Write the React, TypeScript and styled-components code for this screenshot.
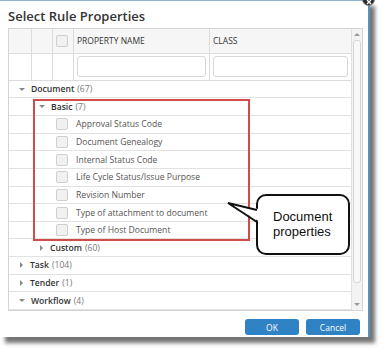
import React from 'react'
import styled, { createGlobalStyle } from 'styled-components'

const GlobalStyle = createGlobalStyle`
  body {
    margin: 0;
    background: #fff;
    font-family: "Open Sans", "Liberation Sans", sans-serif;
  }
`

const Page = styled.div`
  width: 391px;
  height: 356px;
  position: relative;
  overflow: hidden;
  background: #fff;
`

const Dialog = styled.div`
  position: relative;
  width: 370px;
  height: 337px;
  background: #fff;
  border-top: 1px solid #8fb4d2;
  border-right: 2px solid #5e8fb8;
  box-shadow: 5px 6px 4px rgba(0, 0, 0, 0.55);
  padding: 0 8px;
  box-sizing: border-box;
  display: flex;
  flex-direction: column;
`

const CloseButton = styled.div`
  position: absolute;
  right: -7px;
  top: -8px;
  width: 13px;
  height: 13px;
  border-radius: 50%;
  background: #2a2a2a;
  border: 1px solid #888;
  display: flex;
  align-items: center;
  justify-content: center;
  padding-top: 4px;
  box-sizing: border-box;
`

const Title = styled.div`
  height: 27px;
  font-size: 13px;
  font-weight: 600;
  color: #333;
  line-height: 30px;
`

const Grid = styled.div`
  width: 355px;
  height: 283px;
  border: 1px solid #d4d4d4;
  box-sizing: border-box;
  display: flex;
`

const GridBody = styled.div`
  flex: 1;
  display: flex;
  flex-direction: column;
`

const HeaderRow = styled.div<{ $filter?: boolean }>`
  display: grid;
  grid-template-columns: 23px 21px 21px 136px 1fr;
  height: ${p => (p.$filter ? 27 : 25)}px;
  background: ${p => (p.$filter ? '#fff' : '#f6f6f6')};
  border-bottom: 1px solid #dcdcdc;
  box-sizing: border-box;
`

const HeaderCell = styled.div<{ $last?: boolean }>`
  border-right: ${p => (p.$last ? 'none' : '1px solid #dcdcdc')};
  display: flex;
  align-items: center;
  padding: 0 3px;
  font-size: 8.5px;
  color: #333;
  box-sizing: border-box;
`

const FilterInput = styled.div`
  flex: 1;
  height: 19px;
  border: 1px solid #d8d8d8;
  border-radius: 3px;
  background: #fff;
`

const Check = styled.div`
  width: 12px;
  height: 12px;
  border: 1px solid #cfcfcf;
  border-radius: 2px;
  background: #f1f1f1;
  box-sizing: border-box;
  flex-shrink: 0;
`

const TreeRow = styled.div<{ $indent: number }>`
  height: 17.7px;
  border-bottom: 1px solid #e2e2e2;
  box-sizing: border-box;
  display: flex;
  align-items: center;
  padding-left: ${p => p.$indent}px;
  font-size: 8.6px;
  white-space: nowrap;
`

const Arrow = styled.span<{ $open: boolean }>`
  display: inline-block;
  width: 0;
  height: 0;
  margin-right: 6px;
  ${p =>
    p.$open
      ? `border-left: 3px solid transparent; border-right: 3px solid transparent; border-top: 3.5px solid #888;`
      : `border-top: 3px solid transparent; border-bottom: 3px solid transparent; border-left: 3.5px solid #888; margin-left: 1px; margin-right: 7px;`}
`

const GroupName = styled.span`
  color: #333;
  font-weight: 600;
`

const Count = styled.span`
  color: #777;
  margin-left: 3px;
`

const LeafName = styled.span`
  color: #555;
  margin-left: 8px;
`

const Scrollbar = styled.div`
  width: 11px;
  background: #f3f3f3;
  border-left: 1px solid #e0e0e0;
  display: flex;
  flex-direction: column;
  align-items: center;
  padding: 4px 0 4px;
  box-sizing: border-box;
`

const ScrollArrow = styled.div<{ $up: boolean }>`
  width: 0;
  height: 0;
  border-left: 3px solid transparent;
  border-right: 3px solid transparent;
  ${p => (p.$up ? 'border-bottom: 3px solid #999;' : 'border-top: 3px solid #999;')}
`

const Thumb = styled.div`
  width: 8px;
  height: 243px;
  margin: 4px 0 0;
  background: #f8f8f8;
  border: 1px solid #d6d6d6;
  border-radius: 3px;
  box-sizing: border-box;
`

const Spacer = styled.div`
  flex: 1;
`

const Footer = styled.div`
  display: flex;
  justify-content: flex-end;
  gap: 7px;
  padding-top: 8px;
`

const Button = styled.div`
  width: 54px;
  height: 16px;
  border-radius: 3px;
  background: #2f82c3;
  color: #fff;
  font-size: 8.5px;
  display: flex;
  align-items: center;
  justify-content: center;
`

const Highlight = styled.div`
  position: absolute;
  left: 33px;
  top: 99px;
  width: 217px;
  height: 142px;
  border: 2px solid #d24b4b;
  box-sizing: border-box;
`

const Callout = styled.div`
  position: absolute;
  left: 256px;
  top: 194px;
  width: 94px;
  height: 61px;
  border: 2px solid #111;
  border-radius: 10px;
  background: #fff;
  box-sizing: border-box;
  font-family: "Liberation Sans", Arial, sans-serif;
  font-size: 13px;
  line-height: 15px;
  color: #111;
  padding: 13px 0 0 15px;
`

const Pointer = styled.svg`
  position: absolute;
  left: 226px;
  top: 200px;
`

type Row =
  | { kind: 'group'; name: string; count: number; level: number; open: boolean }
  | { kind: 'leaf'; name: string }

const rows: Row[] = [
  { kind: 'group', name: 'Document', count: 67, level: 0, open: true },
  { kind: 'group', name: 'Basic', count: 7, level: 1, open: true },
  { kind: 'leaf', name: 'Approval Status Code' },
  { kind: 'leaf', name: 'Document Genealogy' },
  { kind: 'leaf', name: 'Internal Status Code' },
  { kind: 'leaf', name: 'Life Cycle Status/Issue Purpose' },
  { kind: 'leaf', name: 'Revision Number' },
  { kind: 'leaf', name: 'Type of attachment to document' },
  { kind: 'leaf', name: 'Type of Host Document' },
  { kind: 'group', name: 'Custom', count: 60, level: 1, open: false },
  { kind: 'group', name: 'Task', count: 104, level: 0, open: false },
  { kind: 'group', name: 'Tender', count: 1, level: 0, open: false },
  { kind: 'group', name: 'Workflow', count: 4, level: 0, open: true },
]

const App = () => {
  return (
    <Page>
      <GlobalStyle />
      <Dialog>
        <CloseButton>
          <svg width="6" height="6" viewBox="0 0 6 6">
            <path d="M1 1L5 5M5 1L1 5" stroke="#fff" strokeWidth="1.4" />
          </svg>
        </CloseButton>
        <Title>Select Rule Properties</Title>
        <Grid>
          <GridBody>
            <HeaderRow>
              <HeaderCell />
              <HeaderCell />
              <HeaderCell><Check /></HeaderCell>
              <HeaderCell>PROPERTY NAME</HeaderCell>
              <HeaderCell $last>CLASS</HeaderCell>
            </HeaderRow>
            <HeaderRow $filter>
              <HeaderCell />
              <HeaderCell />
              <HeaderCell />
              <HeaderCell><FilterInput /></HeaderCell>
              <HeaderCell $last><FilterInput /></HeaderCell>
            </HeaderRow>
            {rows.map(r =>
              r.kind === 'group' ? (
                <TreeRow key={r.name} $indent={r.level === 0 ? 10 : 30}>
                  <Arrow $open={r.open} />
                  <GroupName>{r.name}</GroupName>
                  <Count>({r.count})</Count>
                </TreeRow>
              ) : (
                <TreeRow key={r.name} $indent={47}>
                  <Check />
                  <LeafName>{r.name}</LeafName>
                </TreeRow>
              )
            )}
          </GridBody>
          <Scrollbar>
            <ScrollArrow $up />
            <Thumb />
            <Spacer />
            <ScrollArrow $up={false} />
          </Scrollbar>
        </Grid>
        <Footer>
          <Button>OK</Button>
          <Button>Cancel</Button>
        </Footer>
      </Dialog>
      <Highlight />
      <Callout>Document<br />properties</Callout>
      <Pointer width="36" height="26" viewBox="0 0 36 26">
        {/* white wedge hides the callout border where the tail joins */}
        <path d="M35 9.5 L2 3 L35 22.5 Z" fill="#fff" />
        <path d="M31 10 L2 3 L31 22" fill="none" stroke="#111" strokeWidth="2" strokeLinejoin="miter" />
      </Pointer>
    </Page>
  )
}

export default App
